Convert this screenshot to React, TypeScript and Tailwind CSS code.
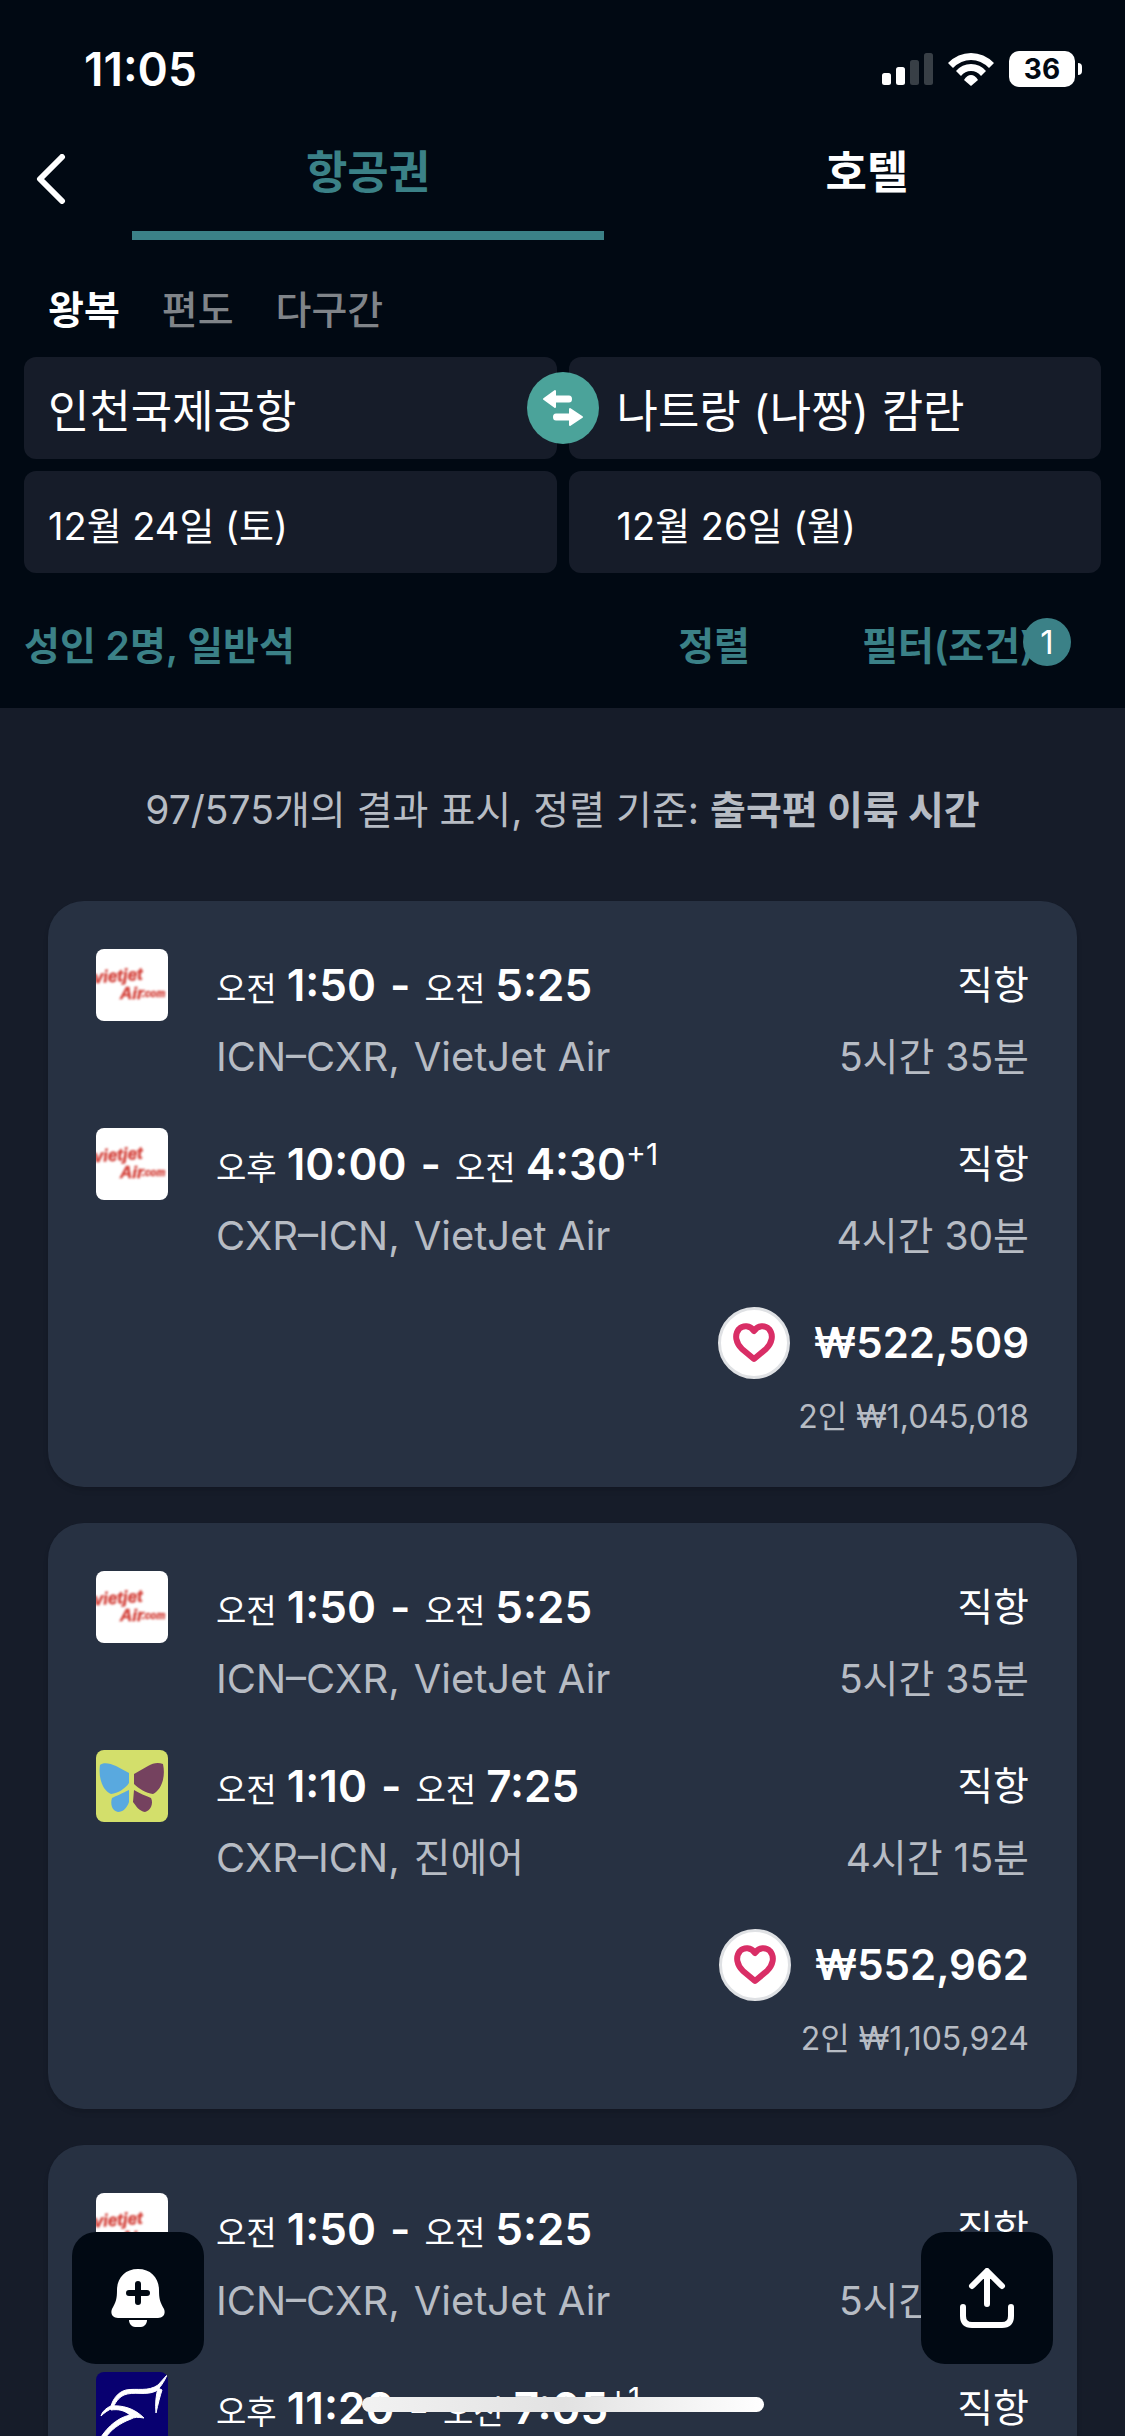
import React from "react";

type AirlineKey = "vietjet" | "jinair" | "swallow";

interface Leg {
  airline: AirlineKey;
  departPeriod: string;
  depart: string;
  arrivePeriod: string;
  arrive: string;
  dayOffset?: string;
  route: string;
  carrier: string;
  stops: string;
  duration: string;
}

interface Itinerary {
  legs: Leg[];
  price: string;
  total: string;
}

const outbound: Leg = {
  airline: "vietjet",
  departPeriod: "오전",
  depart: "1:50",
  arrivePeriod: "오전",
  arrive: "5:25",
  route: "ICN–CXR,",
  carrier: "VietJet Air",
  stops: "직항",
  duration: "5시간 35분",
};

const itineraries: Itinerary[] = [
  {
    legs: [
      outbound,
      {
        airline: "vietjet",
        departPeriod: "오후",
        depart: "10:00",
        arrivePeriod: "오전",
        arrive: "4:30",
        dayOffset: "+1",
        route: "CXR–ICN,",
        carrier: "VietJet Air",
        stops: "직항",
        duration: "4시간 30분",
      },
    ],
    price: "₩522,509",
    total: "2인 ₩1,045,018",
  },
  {
    legs: [
      outbound,
      {
        airline: "jinair",
        departPeriod: "오전",
        depart: "1:10",
        arrivePeriod: "오전",
        arrive: "7:25",
        route: "CXR–ICN,",
        carrier: "진에어",
        stops: "직항",
        duration: "4시간 15분",
      },
    ],
    price: "₩552,962",
    total: "2인 ₩1,105,924",
  },
  {
    legs: [
      outbound,
      {
        airline: "swallow",
        departPeriod: "오후",
        depart: "11:20",
        arrivePeriod: "오전",
        arrive: "7:05",
        dayOffset: "+1",
        route: "CXR–ICN",
        carrier: "",
        stops: "직항",
        duration: "5시간 45분",
      },
    ],
    price: "₩552,962",
    total: "2인 ₩1,105,924",
  },
];

function VietjetLogo() {
  return (
    <svg viewBox="0 0 72 72" className="size-full bg-white" role="img" aria-label="VietJet Air">
      <g fill="#d4443d" stroke="#d4443d" strokeWidth="0.5" fontFamily="Liberation Sans" fontWeight="700" fontStyle="italic" className="blur-[1px]">
        <text x="-2" y="34" fontSize="17" transform="rotate(-4 0 34)">vietjet</text>
        <text x="24" y="50" fontSize="17">Air</text>
        <text x="46" y="48" fontSize="10">.com</text>
      </g>
    </svg>
  );
}

function JinairLogo() {
  return (
    <svg viewBox="0 0 72 72" className="size-full bg-[#d3df6b]" role="img" aria-label="진에어">
      <path d="M4 15C7 12 14 13 20 16L33 23V33C29 39 22 43 15 44C7 41 2 28 4 15Z" fill="#59a9df" />
      <path d="M33 40V52C31 58 27 62 22 62C16 61 14 54 16 48C20 46 27 43 33 40Z" fill="#59a9df" />
      <path d="M67 14C62 12 57 13 52 16L38 24V34C43 39 50 43 57 44C65 40 70 28 67 14Z" fill="#75425f" />
      <path d="M38 40C43 43 50 46 55 48C58 54 54 61 49 62C43 61 40 56 37 52Z" fill="#75425f" />
    </svg>
  );
}

function SwallowLogo() {
  return (
    <svg viewBox="0 0 72 72" className="size-full bg-[#080070]" role="img" aria-label="항공사">
      <g fill="#fff" stroke="#fff" strokeWidth="1" strokeLinejoin="round">
        <path d="M71 3C68 10 64 16 60 19C50 24 38 19 28 23C22 26 19 31 17 36C12 38 8 41 5 44C6 40 10 36 15 34C17 27 22 20 30 18C41 16 52 20 62 13Z" />
        <path d="M62 16L66 18C64 24 62 32 60 41C59 32 60 23 62 16Z" />
        <path d="M15 34C26 33 38 36 48 46C42 45 38 45 35 47C24 51 14 58 8 68L4 72H1C8 58 20 46 34 43C28 38 22 37 15 38Z" />
      </g>
    </svg>
  );
}

function AirlineLogo({ airline }: { airline: AirlineKey }) {
  return (
    <div className="size-18 shrink-0 overflow-hidden rounded-lg">
      {airline === "vietjet" && <VietjetLogo />}
      {airline === "jinair" && <JinairLogo />}
      {airline === "swallow" && <SwallowLogo />}
    </div>
  );
}

function LegRow({ leg }: { leg: Leg }) {
  return (
    <div className="flex gap-12">
      <AirlineLogo airline={leg.airline} />
      <div className="min-w-0 flex-1 leading-[72px]">
        <div className="flex h-18 justify-between">
          <div className="flex items-baseline whitespace-nowrap">
            <span className="mr-2.5 text-[33px]">{leg.departPeriod}</span>
            <span className="text-[44px] font-semibold">{leg.depart}</span>
            <span className="mx-3.5 text-[44px] font-semibold">-</span>
            <span className="mr-2.5 text-[33px]">{leg.arrivePeriod}</span>
            <span className="text-[44px] font-semibold">{leg.arrive}</span>
            {leg.dayOffset && <sup className="text-[30px] leading-none">{leg.dayOffset}</sup>}
          </div>
          <span className="text-[39px]">{leg.stops}</span>
        </div>
        <div className="flex h-18 justify-between whitespace-nowrap text-[39px] text-[#b7bcc4]">
          <span className="flex gap-3.5 text-[40px]">
            <span>{leg.route}</span>
            <span>{leg.carrier}</span>
          </span>
          <span>{leg.duration}</span>
        </div>
      </div>
    </div>
  );
}

function Card({ item }: { item: Itinerary }) {
  return (
    <article className="flex shrink-0 flex-col gap-[35px] rounded-[36px] bg-[#273142] p-12 shadow-md">
      {item.legs.map((leg, i) => (
        <LegRow key={i} leg={leg} />
      ))}
      <div className="flex flex-col items-end">
        <div className="flex h-18 items-center gap-6">
          <button
            type="button"
            aria-label="저장"
            className="flex size-18 items-center justify-center rounded-full border-3 border-[#dfe1e4] bg-white"
          >
            <svg viewBox="0 0 42 40" className="h-10 w-[42px]" fill="none" stroke="#d92e66" strokeWidth="6" strokeLinejoin="round">
              <path d="M21 8C17 2 10 2 6 6C1 12 3 20 9 26L21 36L33 26C39 20 41 12 36 6C32 2 25 2 21 8Z" />
            </svg>
          </button>
          <span className="text-[42px] leading-[72px] font-semibold">{item.price}</span>
        </div>
        <span className="mt-4 h-11 text-[32px] leading-11 text-[#b7bcc4]">{item.total}</span>
      </div>
    </article>
  );
}

function StatusBar() {
  return (
    <div className="flex h-[138px] items-center justify-between pr-[43px] pl-21">
      <span className="text-[46px] font-semibold">11:05</span>
      <div className="flex items-center gap-[15px]">
        <svg viewBox="0 0 51 32" className="h-8 w-[51px]" fill="#fff" aria-hidden="true">
          <rect x="0" y="20" width="9" height="12" rx="2.5" />
          <rect x="14" y="14" width="9" height="18" rx="2.5" />
          <rect x="28" y="7" width="9" height="25" rx="2.5" opacity=".22" />
          <rect x="42" y="0" width="9" height="32" rx="2.5" opacity=".22" />
        </svg>
        <svg viewBox="0 0 46 33" className="h-[33px] w-[46px]" fill="#fff" aria-hidden="true">
          <path d="M0 10Q10 0 23 0T46 10L41 15Q33 7 23 7T5 15Z" />
          <path d="M8 18Q14 11 23 11T38 18L33 23Q29 18 23 18T13 23Z" />
          <path d="M16 27Q19 22 23 22T30 27L23 33Z" />
        </svg>
        <div className="flex items-center gap-[3px]">
          <span className="flex h-9 w-[66px] items-center justify-center rounded-[10px] bg-white text-[28px] font-bold text-[#010913]">
            36
          </span>
          <span className="h-3 w-1 rounded-r-full bg-white" />
        </div>
      </div>
    </div>
  );
}

export default function App() {
  return (
    <main className="relative flex h-screen flex-col overflow-hidden bg-[#161c29] font-['Inter','Noto_Sans_CJK_KR',sans-serif] text-white">
      <header className="flex shrink-0 flex-col bg-[#010913] pb-4">
        <StatusBar />
        <nav className="flex h-[102px] items-stretch pr-[22px]">
          <button type="button" aria-label="뒤로" className="flex w-33 items-center pb-5 pl-9">
            <svg viewBox="0 0 30 50" className="h-[50px] w-[30px]" fill="none" stroke="#fff" strokeWidth="6" strokeLinecap="round" strokeLinejoin="round">
              <path d="M26 3L4 25L26 47" />
            </svg>
          </button>
          <div className="grid flex-1 grid-cols-2 gap-[27px] text-[45px] font-bold">
            <button type="button" className="border-b-9 border-[#3b8187] pb-6 text-[#3b8187]">
              항공권
            </button>
            <button type="button" className="border-b-9 border-transparent pb-6">
              호텔
            </button>
          </div>
        </nav>
        <div className="flex gap-[42px] px-12 pt-10 text-[39px] leading-[60px] font-medium text-[#808489]">
          <button type="button" className="font-bold text-white">왕복</button>
          <button type="button">편도</button>
          <button type="button">다구간</button>
        </div>
        <div className="relative mt-[17px] grid grid-cols-2 gap-3 px-6">
          <button type="button" className="h-[102px] rounded-xl bg-[#161c29] px-6 pt-2 text-left text-[45px]">인천국제공항</button>
          <button type="button" className="h-[102px] rounded-xl bg-[#161c29] px-12 pt-2 text-left text-[45px]">나트랑 (나짱) 캄란</button>
          <button type="button" className="h-[102px] rounded-xl bg-[#161c29] px-6 pt-2 text-left text-[38px]">12월 24일 (토)</button>
          <button type="button" className="h-[102px] rounded-xl bg-[#161c29] px-12 pt-2 text-left text-[38px]">12월 26일 (월)</button>
          <button
            type="button"
            aria-label="출발지와 도착지 바꾸기"
            className="absolute top-[15px] left-1/2 size-18 -translate-x-1/2 rounded-full bg-[#4ba39a]"
          >
            <svg viewBox="0 0 72 72" className="size-full" fill="#fff" stroke="#fff" strokeWidth="2" strokeLinejoin="round">
              <path d="M17 27L28 19V24.500H42Q44 24.500 44 27T42 29.500H28V35Z" />
              <path d="M55 45L43 37V42.500H29Q27 42.500 27 45T29 47.500H43V53Z" />
            </svg>
          </button>
        </div>
        <div className="flex h-[119px] items-center pt-[26px] pr-[54px] pl-6 text-[39px] leading-12 font-semibold text-[#3b8187]">
          <button type="button">성인 2명, 일반석</button>
          <button type="button" className="ml-auto">정렬</button>
          <button type="button" className="relative ml-28 flex w-[209px] whitespace-nowrap">
            필터(조건)
            <span className="absolute -top-1 right-0 flex size-12 items-center justify-center rounded-full bg-[#3b8187] text-[33px] font-normal text-white">
              1
            </span>
          </button>
        </div>
      </header>

      <section className="flex min-h-0 flex-1 flex-col gap-9 overflow-y-auto px-12 [scrollbar-width:none]">
        <p className="shrink-0 pt-[72px] pb-[25px] text-center text-[39px] leading-[60px] whitespace-nowrap text-[#b7bcc4]">
          97/575개의 결과 표시, 정렬 기준: <strong>출국편 이륙 시간</strong>
        </p>
        {itineraries.map((item, i) => (
          <Card key={i} item={item} />
        ))}
      </section>

      <div className="absolute inset-x-0 bottom-18 flex justify-between px-18">
        <button type="button" aria-label="가격 알림 추가" className="flex size-33 items-center justify-center rounded-[24px] bg-[#010913]">
          <svg viewBox="0 0 54 58" className="h-[58px] w-[54px]" aria-hidden="true">
            <path fill="#fff" d="M27 0C14 0 6 9 6 21C6 30 5 33 1 40C-1 45 2 49 7 49H47C52 49 55 45 53 40C49 33 48 30 48 21C48 9 40 0 27 0Z" />
            <path fill="#fff" d="M18 51H36C36 55 33 58 30 58H24C21 58 18 55 18 51Z" />
            <path stroke="#010913" strokeWidth="6" strokeLinecap="round" d="M27 15V33M18 24H36" />
          </svg>
        </button>
        <button type="button" aria-label="공유" className="flex size-33 items-center justify-center rounded-[24px] bg-[#010913]">
          <svg viewBox="0 0 56 60" className="h-15 w-14" fill="none" stroke="#fff" strokeWidth="6" strokeLinecap="round" strokeLinejoin="round" aria-hidden="true">
            <path d="M28 36V4M13 18L28 3L43 18M4 39V48Q4 57 13 57H43Q52 57 52 48V39" />
          </svg>
        </button>
      </div>
      <div className="absolute bottom-6 left-1/2 h-[15px] w-[402px] -translate-x-1/2 rounded-full bg-linear-to-r from-[#f2f2f2] via-[#e2e2e2] to-white" />
    </main>
  );
}
